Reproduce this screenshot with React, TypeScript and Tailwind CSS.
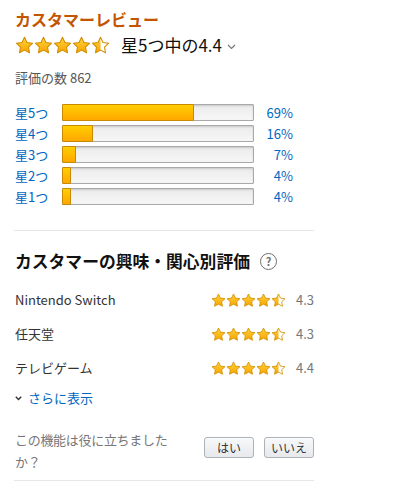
import { useId } from "react";

const STAR = "M12 1.6l3.15 6.5 7.15 1-5.2 5 1.25 7.1L12 17.8l-6.35 3.4 1.25-7.1-5.2-5 7.15-1z";

function Star({ fill, size }: { fill: number; size: number }) {
  const id = useId().replace(/[^a-zA-Z0-9]/g, "");
  return (
    <svg width={size} height={size} viewBox="0 0 24 24" className="block shrink-0">
      <defs>
        <linearGradient id={`${id}g`} x1="0" y1="0" x2="0" y2="1">
          <stop offset="0" stopColor="#ffd43a" />
          <stop offset="1" stopColor="#f7a400" />
        </linearGradient>
        <clipPath id={`${id}c`}>
          <rect x="0" y="0" width={24 * fill} height="24" />
        </clipPath>
      </defs>
      <path d={STAR} fill="#fff" />
      <path d={STAR} fill={`url(#${id}g)`} clipPath={`url(#${id}c)`} />
      <path d={STAR} fill="none" stroke="#d08c00" strokeWidth="1.3" strokeLinejoin="round" />
    </svg>
  );
}

function Stars({ size }: { size: number }) {
  return (
    <div className="flex">
      {[1, 1, 1, 1, 0.5].map((f, i) => (
        <Star key={i} fill={f} size={size} />
      ))}
    </div>
  );
}

const histogram = [
  { label: "星5つ", pct: 69 },
  { label: "星4つ", pct: 16 },
  { label: "星3つ", pct: 7 },
  { label: "星2つ", pct: 4 },
  { label: "星1つ", pct: 4 },
];

const features = [
  { name: "Nintendo Switch", score: "4.3" },
  { name: "任天堂", score: "4.3" },
  { name: "テレビゲーム", score: "4.4" },
];

export default function App() {
  return (
    <div
      className="min-h-[494px] w-[400px] bg-white"
      style={{ fontFamily: '"Noto Sans CJK JP", "Liberation Sans", sans-serif' }}
    >
      <div className="ml-[14px] w-[300px] pt-[9px]">
        <h2 className="pl-px text-[16px] font-bold leading-[20px] text-[#c45500]">カスタマーレビュー</h2>

        <div className="mt-[6px] flex items-center pl-px">
          <Stars size={19} />
          <span className="ml-[11px] text-[17px] leading-[20px] text-[#111]">星5つ中の4.4</span>
          <svg width="9" height="6" viewBox="0 0 9 6" className="ml-[5px] mt-[3px]">
            <path d="M1 1l3.5 3.5L8 1" fill="none" stroke="#777" strokeWidth="1.2" />
          </svg>
        </div>

        <p className="mt-[14px] pl-px text-[13px] leading-[18px] text-[#555]">評価の数 862</p>

        <div className="mt-[17px] flex flex-col gap-[4px]">
          {histogram.map((row) => (
            <div key={row.label} className="flex h-[17px] items-center">
              <span className="w-[48px] pl-px text-[13px] leading-[17px] text-[#0066c0]">{row.label}</span>
              <div className="relative h-[17px] w-[192px] rounded-[1px] border border-[#a9a9a9] bg-gradient-to-b from-[#ebebeb] to-[#f7f7f7] shadow-[inset_0_1px_2px_rgba(0,0,0,0.15)]">
                <div
                  className="absolute -left-px -top-px h-[17px] rounded-[1px] border border-[#c88a00] bg-gradient-to-b from-[#ffce00] to-[#ffa700]"
                  style={{ width: `calc(${row.pct}% + 1px)` }}
                />
              </div>
              <span className="w-[39px] text-right text-[13px] leading-[17px] text-[#0066c0]">{row.pct}%</span>
            </div>
          ))}
        </div>

        <div className="mt-[25px] h-px bg-[#e7e7e7]" />

        <div className="mt-[20px] flex items-center">
          <h3 className="pl-px text-[16.8px] font-bold leading-[20px] text-[#111]">カスタマーの興味・関心別評価</h3>
          <span className="ml-[10px] flex h-[17px] w-[17px] items-center justify-center rounded-full border-[1.5px] border-[#6f6f6f] text-[11px] font-bold leading-none text-[#6f6f6f]">
            ?
          </span>
        </div>

        <div className="mt-[19px] flex flex-col gap-[14px]">
          {features.map((f) => (
            <div key={f.name} className="flex h-[20px] items-center">
              <span className="flex-1 pl-px text-[13px] leading-[20px] text-[#333]">{f.name}</span>
              <Stars size={15} />
              <span className="ml-[10px] w-[18px] text-[13px] leading-[20px] text-[#777]">{f.score}</span>
            </div>
          ))}
        </div>

        <div className="mt-[11px] flex items-center pl-px">
          <svg width="7" height="5" viewBox="0 0 7 5" className="mt-px">
            <path d="M0.8 0.8L3.5 3.6 6.2 0.8" fill="none" stroke="#333" strokeWidth="1.4" />
          </svg>
          <span className="ml-[6px] text-[13px] leading-[18px] text-[#0066c0]">さらに表示</span>
        </div>

        <div className="mt-[22px] flex items-start justify-between">
          <p className="w-[170px] pl-px text-[13px] leading-[22px] tracking-[-0.3px] text-[#777]">
            この機能は役に立ちましたか？
          </p>
          <div className="mt-[8px] flex gap-[10px]">
            {["はい", "いいえ"].map((t) => (
              <button
                key={t}
                type="button"
                className="h-[21px] w-[50px] rounded-[3px] border border-[#adb1b8] bg-gradient-to-b from-[#f7f8fa] to-[#e7e9ec] text-[12px] leading-[19px] text-[#333] shadow-[0_1px_0_rgba(255,255,255,0.6)_inset]"
              >
                {t}
              </button>
            ))}
          </div>
        </div>

        <div className="mt-[7px] h-px bg-[#e7e7e7]" />
      </div>
    </div>
  );
}
